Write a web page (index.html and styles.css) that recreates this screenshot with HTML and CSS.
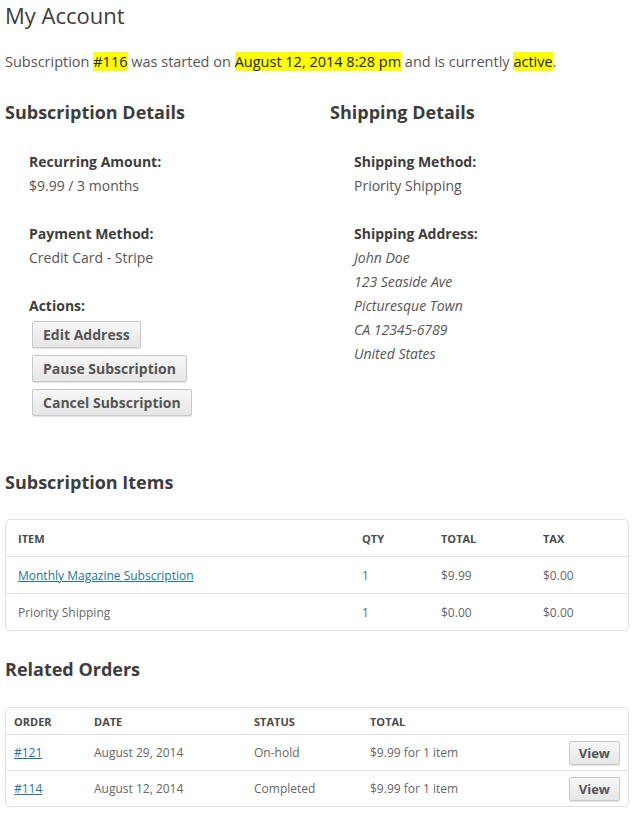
FILE: index.html
```html
<!DOCTYPE html>
<html>
<head>
<meta charset="utf-8">
<link rel="stylesheet" href="styles.css">
</head>
<body>
<h1 class="page-title">My Account</h1>
<p class="intro">Subscription <mark>#116</mark> was started on <mark>August 12, 2014 8:28 pm</mark> and is currently <mark>active</mark>.</p>

<div class="details">
  <section class="col col-left">
    <h2 class="section-title">Subscription Details</h2>
    <dl class="info">
      <dt>Recurring Amount:</dt>
      <dd>$9.99 / 3 months</dd>
      <dt>Payment Method:</dt>
      <dd>Credit Card - Stripe</dd>
      <dt>Actions:</dt>
      <dd class="actions">
        <button class="btn">Edit Address</button>
        <button class="btn">Pause Subscription</button>
        <button class="btn">Cancel Subscription</button>
      </dd>
    </dl>
  </section>
  <section class="col col-right">
    <h2 class="section-title">Shipping Details</h2>
    <dl class="info">
      <dt>Shipping Method:</dt>
      <dd>Priority Shipping</dd>
      <dt>Shipping Address:</dt>
      <dd class="address">John Doe<br>123 Seaside Ave<br>Picturesque Town<br>CA 12345-6789<br>United States</dd>
    </dl>
  </section>
</div>

<h2 class="section-title items-title">Subscription Items</h2>
<div class="table-box">
  <table class="data items">
    <colgroup><col class="c-item"><col class="c-qty"><col class="c-total"><col></colgroup>
    <thead><tr><th>Item</th><th>Qty</th><th>Total</th><th>Tax</th></tr></thead>
    <tbody>
      <tr><td><a href="#">Monthly Magazine Subscription</a></td><td>1</td><td>$9.99</td><td>$0.00</td></tr>
      <tr><td>Priority Shipping</td><td>1</td><td>$0.00</td><td>$0.00</td></tr>
    </tbody>
  </table>
</div>

<h2 class="section-title orders-title">Related Orders</h2>
<div class="table-box orders-box">
  <table class="data orders">
    <colgroup><col class="c-order"><col class="c-date"><col class="c-status"><col><col></colgroup>
    <thead><tr><th>Order</th><th>Date</th><th>Status</th><th>Total</th><th></th></tr></thead>
    <tbody>
      <tr><td><a href="#">#121</a></td><td>August 29, 2014</td><td>On-hold</td><td>$9.99 for 1 item</td><td class="act"><button class="btn btn-small">View</button></td></tr>
      <tr><td><a href="#">#114</a></td><td>August 12, 2014</td><td>Completed</td><td>$9.99 for 1 item</td><td class="act"><button class="btn btn-small">View</button></td></tr>
    </tbody>
  </table>
</div>
</body>
</html>
```

FILE: styles.css
```css
html, body {
  margin: 0;
  padding: 0;
  background: #fff;
}
body {
  padding: 0 5px;
  font-family: "Open Sans", "Noto Sans", sans-serif;
  color: #555;
  font-size: 15px;
}
.page-title {
  margin: 0;
  font-size: 22px;
  line-height: 30px;
  font-weight: 400;
  color: #3d3d3d;
}
.intro {
  margin: 20px 0 0;
  font-size: 14.5px;
  line-height: 24px;
}
.intro mark {
  background: #ffff00;
  color: #222;
}
.details {
  display: grid;
  grid-template-columns: 325px 1fr;
}
.section-title {
  margin: 27px 0 0;
  font-size: 18px;
  line-height: 24px;
  font-weight: 700;
  color: #3d3d3d;
}
.details .section-title {
  margin-top: 26px;
}
.info {
  margin: 26px 0 0 24px;
  font-size: 14px;
  line-height: 24px;
}
.info dt {
  font-weight: 700;
  color: #3d3d3d;
}
.info dd {
  margin: 0 0 24px;
}
.info dd.address {
  font-style: italic;
}
.info dd.actions {
  margin: 3px 0 0 3px;
  display: flex;
  flex-direction: column;
  align-items: flex-start;
  gap: 7px;
}
.btn {
  font-family: "Open Sans", "Noto Sans", sans-serif;
  font-weight: 700;
  font-size: 14px;
  color: #555;
  height: 27px;
  padding: 0 10px;
  border: 1px solid #c8c8c8;
  border-radius: 2px;
  background: linear-gradient(#f7f7f7, #e6e6e6);
  box-shadow: 0 1px 1px rgba(0,0,0,0.12);
  line-height: 25px;
}
.items-title {
  margin-top: 54px;
}
.orders-title {
  margin-top: 26px;
}
.table-box {
  margin-top: 25px;
  border: 1px solid #e1e1e1;
  border-radius: 5px;
  overflow: hidden;
}
.orders-box {
  margin-top: 26px;
}
.data {
  width: 100%;
  border-collapse: collapse;
  font-size: 12px;
  color: #666;
}
.data th {
  text-align: left;
  text-transform: uppercase;
  font-size: 11px;
  font-weight: 700;
  color: #4a4a4a;
}
.data td, .data th {
  border-top: 1px solid #e1e1e1;
  vertical-align: middle;
}
.data thead th {
  border-top: none;
}
.data a {
  color: #21759b;
  text-decoration: underline;
}
.items th, .items td {
  height: 36px;
  padding: 0 12px;
}
.items .c-item { width: 344px; }
.items .c-qty { width: 79px; }
.items .c-total { width: 102px; }
.orders th {
  height: 26px;
  padding: 0 8px;
}
.orders td {
  height: 35px;
  padding: 0 8px;
}
.orders .c-order { width: 80px; }
.orders .c-date { width: 160px; }
.orders .c-status { width: 116px; }
.orders td.act {
  text-align: right;
}
.btn-small {
  height: 24px;
  line-height: 22px;
  font-size: 13px;
  padding: 0 9px;
}
```
